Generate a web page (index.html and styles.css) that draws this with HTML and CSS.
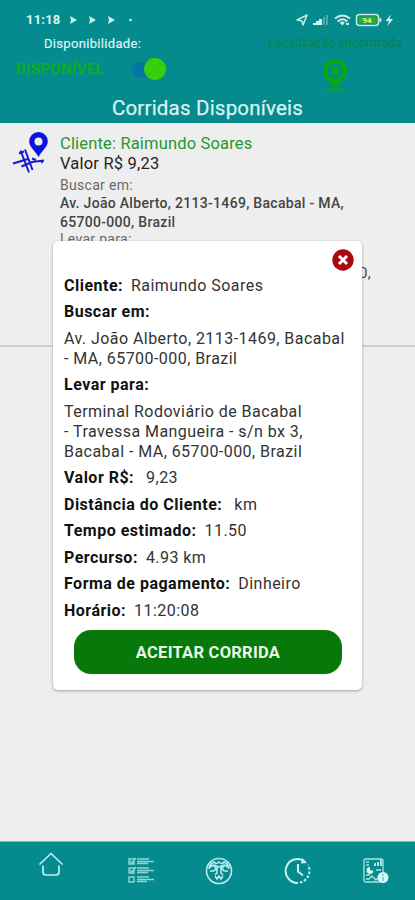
FILE: index.html
```html
<!DOCTYPE html>
<html lang="pt-BR">
<head>
<meta charset="utf-8">
<title>Corridas Disponíveis</title>
<link rel="stylesheet" href="styles.css">
</head>
<body>
<div class="app">
  <header class="header">
    <div class="status">
      <div class="status-left">
        <span class="time">11:18</span>
        <svg class="plays" width="68" height="10" viewBox="0 0 68 10"><g fill="#cdf0ee"><path d="M1 1l7 4-7 4 1-4zM20 1l7 4-7 4 1-4zM39 1l7 4-7 4 1-4z"/><circle cx="61.500" cy="5" r="1.300"/></g></svg>
      </div>
      <svg class="status-icons" width="100" height="16" viewBox="0 0 100 16">
        <path d="M2 8L12 3 8 13 7 9z" fill="none" stroke="#c2ebe9" stroke-width="1.500" stroke-linejoin="round"/>
        <path d="M18 13v-2h3v2zm3 0v-4h3v4zm3 0V7h3v6z" fill="#d4f3f1"/>
        <path d="M28 5h2v8h-2zM31 3h2v10h-2z" fill="#4fadb0"/>
        <g fill="none" stroke="#c9eeec" stroke-width="2"><path d="M40 6.500Q47.500 .5 55 6.500M42.500 9.500Q47.500 5 52.500 9.500"/></g>
        <path d="M44.500 10.500Q47.500 8.500 50 10.500L47.500 13.500zM51 11h3v2h-3z" fill="#c9eeec"/>
        <rect x="61.500" y="2.500" width="22" height="11" rx="3" fill="none" stroke="#c5ecea" stroke-width="1.500"/>
        <path d="M85 6q2.500 2 0 4z" fill="#c5ecea" stroke="#c5ecea"/>
        <rect x="63.500" y="4.500" width="18" height="7" rx="1" fill="#31ad22"/>
        <text x="67.500" y="11" class="battery-text">94</text>
        <path d="M96 2.500l-5.500 6.500h3.500l-1.500 5 5.500-7h-3.500z" fill="#d7f5f3"/>
      </svg>
    </div>
    <div class="controls">
      <div class="availability">
        <div class="avail-label"><span>Disponibilidade:</span></div>
        <div class="avail-row">
          <span class="avail-state">DISPONÍVEL</span>
          <span class="switch"><span class="thumb"></span></span>
        </div>
      </div>
      <div class="location">
        <div class="location-label">Localização encontrada</div>
        <svg class="pin" width="26" height="34" viewBox="0 0 26 34">
          <path fill-rule="evenodd" fill="#07aa10" d="M13 1C6 1 1 6 1 12.500c0 7 7 11.500 12 17.500 5-6 12-10.500 12-17.500C25 6 20 1 13 1zm0 4.500a7.500 7.500 0 1 1 0 15 7.500 7.500 0 0 1 0-15z"/>
          <circle cx="13" cy="12.500" r="4" fill="#07aa10"/><path d="M4 31.500h18" stroke="#07aa10" stroke-width="2"/>
        </svg>
      </div>
    </div>
    <h1 class="title">Corridas Disponíveis</h1>
  </header>

  <main class="list">
    <article class="ride">
      <svg class="map-icon" width="36" height="42" viewBox="0 0 36 42">
        <path fill="none" stroke="#151bd3" stroke-width="2" d="M8.500 18.500l8.500 22M13 17.500l7.500 20.500M1 31.500L16 27M9.500 34.500L20 30l12-1.500M20 26.500l4 1.500M29 28l1.500 3M7 21.500l5-2"/>
        <path fill-rule="evenodd" fill="#0b12dc" d="M26.500 0a9.300 9.300 0 0 0-9.300 9.300c0 6 6.300 9.700 9.300 15.700 3-6 9.300-9.700 9.300-15.700A9.300 9.300 0 0 0 26.500 0zm0 5.500a4 4 0 1 1 0 8 4 4 0 0 1 0-8z"/>
      </svg>
      <div class="ride-text">
        <div class="ride-client">Cliente: Raimundo Soares</div>
        <div class="ride-value">Valor R$ 9,23</div>
        <div class="ride-label">Buscar em:</div>
        <div class="ride-address">Av. João Alberto, 2113-1469, Bacabal - MA,<br>65700-000, Brazil</div>
        <div class="ride-label ride-to">Levar para:</div>
        <div class="ride-address ride-dest">0,</div>
      </div>
    </article>
  </main>

  <nav class="nav">
    <svg class="home" width="26" height="26" viewBox="0 0 26 26" fill="none" stroke="#b9f1f0" stroke-width="1.700" stroke-linecap="round" stroke-linejoin="round"><path d="M2 13L13 2.500 24 13M5 15v6q0 3 3 3h10q3 0 3-3v-6"/></svg>
    <svg width="28" height="28" viewBox="0 0 28 28" fill="none" stroke="#8fd5d5" stroke-width="1.400"><path d="M2 2h5v5H2zM2 11h5v5H2zM2 20h5v5H2zM3 4l2 2 4-5M3 13l2 2 4-5"/><path d="M10 2h12M10 4.500h17M10 6.500h11M10 11h12M10 13.500h17M10 15.500h11M10 20h12M10 22.500h17M10 24.500h10" stroke-width="1.700"/></svg>
    <svg width="28" height="28" viewBox="0 0 28 28" fill="none" stroke="#b5ebea" stroke-width="1.600"><circle cx="14" cy="14" r="12.500"/><path d="M4 12q0-5 5-7 2 3 5 0 3 3 5 0 5 2 5 7M4 11l4-3 3 3M24 11l-4-3-3 3M9 8l5 2 5-2M5 14h4l2-3M23 14h-4l-2-3M12 10v6l-2 2M16 10v6l2 2"/><path d="M10 19l2 3 2-3 2 3 2-3"/></svg>
    <svg width="28" height="28" viewBox="0 0 28 28" fill="none" stroke="#c8f3f2" stroke-width="2"><path d="M21 4.500A12 12 0 1 0 14 26M14 7v7.500l5 4"/><path d="M16 25.500A12 12 0 0 0 24 8" stroke-dasharray="2.500 1.800"/><path d="M18 1l5 5-6 .5z" fill="#c8f3f2" stroke="none"/></svg>
    <svg width="28" height="28" viewBox="0 0 28 28" fill="none" stroke="#a9e4e3" stroke-width="1.300"><path d="M18 25H4q-2 0-2-2V4q0-2 2-2h15q2 0 2 2v11"/><path d="M4 5h3M4 8h3M4 18h4M4 22h3l3-3 4 4 3-3M14 13h5"/><path d="M12 9V6h2v3zm3 0V5h2v4zm3 0V3h2v6z" fill="#a9e4e3" stroke="none"/><path d="M8 10a3.500 3.500 0 1 0 3.500 4L8 13z" fill="#d2f5f4" stroke="none"/><circle cx="21" cy="20.500" r="5.500" fill="#d6f8f6" stroke="none"/><path d="M21 20v4M21 17v1.500" stroke="#6dbcbc" stroke-width="1.500"/></svg>
  </nav>

  <section class="modal">
    <svg class="close" width="22" height="22" viewBox="0 0 22 22"><circle cx="11" cy="11" r="10.700" fill="#a80a0c"/><path d="M7 7l8 8M15 7l-8 8" stroke="#fff" stroke-width="3"/></svg>
    <div class="details">
      <p><b>Cliente:</b><span class="gap">Raimundo Soares</span></p>
      <p><b>Buscar em:</b></p>
      <p class="addr">Av. João Alberto, 2113-1469, Bacabal<br>- MA, 65700-000, Brazil</p>
      <p><b>Levar para:</b></p>
      <p class="addr">Terminal Rodoviário de Bacabal<br>- Travessa Mangueira - s/n bx 3,<br>Bacabal - MA, 65700-000, Brazil</p>
      <p><b>Valor R$:</b><span class="gap wide">9,23</span></p>
      <p><b>Distância do Cliente:</b><span class="gap wide">km</span></p>
      <p><b>Tempo estimado:</b><span class="gap">11.50</span></p>
      <p><b>Percurso:</b><span class="gap">4.93 km</span></p>
      <p><b>Forma de pagamento:</b><span class="gap">Dinheiro</span></p>
      <p><b>Horário:</b><span class="gap">11:20:08</span></p>
    </div>
    <button class="accept">ACEITAR CORRIDA</button>
  </section>
</div>
</body>
</html>
```
FILE: styles.css
```css
* { box-sizing: border-box; }
body { margin: 0; font-family: Roboto, sans-serif; }
.app { position: relative; width: 415px; height: 900px; display: flex; flex-direction: column; background: #eee; overflow: hidden; }
.header { height: 123px; flex: none; background: #058a8e; color: #d9f4f3; display: flex; flex-direction: column; }
.status { height: 35px; padding: 5px 20px 0 26px; display: flex; justify-content: space-between; align-items: center; flex: none; }
.status-left { display: flex; align-items: center; gap: 8px; }
.time { font-size: 13px; font-weight: 700; letter-spacing: .2px; line-height: 16px; }
.battery-text { font: 700 8px Roboto, sans-serif; fill: #c9f4b5; }
.controls { height: 60px; display: flex; justify-content: space-between; flex: none; }
.availability { width: 180px; }
.avail-label { padding-left: 44px; font-size: 13px; line-height: 17px; letter-spacing: .32px; -webkit-text-stroke: .2px; }
.avail-row { display: flex; align-items: center; height: 22px; margin-top: 6px; padding-left: 16px; }
.avail-state { width: 116px; font-size: 15px; font-weight: 500; color: #0daf22; letter-spacing: .42px; -webkit-text-stroke: .3px; }
.switch { width: 34px; height: 15px; border-radius: 8px; background: #0675a1; display: flex; justify-content: flex-end; align-items: center; }
.thumb { width: 22px; height: 22px; flex: none; border-radius: 50%; background: #35cf0b; }
.location { width: 160px; display: flex; flex-direction: column; align-items: center; }
.location-label { font-size: 12px; line-height: 16px; color: #04844a; letter-spacing: .3px; }
.pin { margin-top: 7px; }
.title { margin: 0; text-align: center; font-size: 20.500px; font-weight: 400; line-height: 27px; letter-spacing: .2px; -webkit-text-stroke: .25px; }
.list { flex: 1; }
.ride { height: 224px; border-bottom: 2px solid #d0d0d0; padding: 9px 0 0 12px; display: flex; gap: 12px; }
.ride-text { white-space: nowrap; color: #333; }
.ride-client { color: #27962f; font-size: 16.500px; line-height: 20px; padding-top: 2px; letter-spacing: .17px; }
.ride-value { color: #242424; font-size: 16.500px; line-height: 20px; letter-spacing: .2px; }
.ride-label { color: #696969; font-size: 14px; line-height: 18px; margin-top: 2px; letter-spacing: .3px; }
.ride-address { color: #444; font-size: 14px; font-weight: 500; line-height: 18.500px; letter-spacing: .3px; }
.ride-to { margin-top: 0; line-height: 16px; }
.ride-dest { margin: 17px 0 0 299px; font-size: 15px; font-weight: 400; }
.nav { height: 59px; flex: none; background: #058a8e; border-top: 1px solid #72bdbf; display: flex; align-items: center; gap: 50.500px; padding-left: 38px; }
.home { margin: -14px 12px 0 0; }
.modal { position: absolute; left: 53px; top: 241px; width: 309px; height: 449px; background: #fff; border-radius: 5px; box-shadow: 0 1px 3px #0005; padding: 8px 8px 16px 11px; display: flex; flex-direction: column; color: #161616; }
.close { align-self: flex-end; flex: none; }
.details { margin-top: 4.500px; font-size: 16px; white-space: nowrap; color: #333; letter-spacing: .45px; }
.details p { margin: 0 0 6.500px; line-height: 20px; }
.details b { color: #111; font-weight: 700; letter-spacing: .49px; }
.gap { margin-left: 8px; }
.wide { margin-left: 12px; }
.accept { width: 268px; height: 44px; flex: none; margin: 2.500px 0 0 10px; border: 0; border-radius: 17px; background: #08780b; color: #e8f6e8; font: 700 16.500px Roboto, sans-serif; letter-spacing: .25px; padding: 2px 0 0; }
```
